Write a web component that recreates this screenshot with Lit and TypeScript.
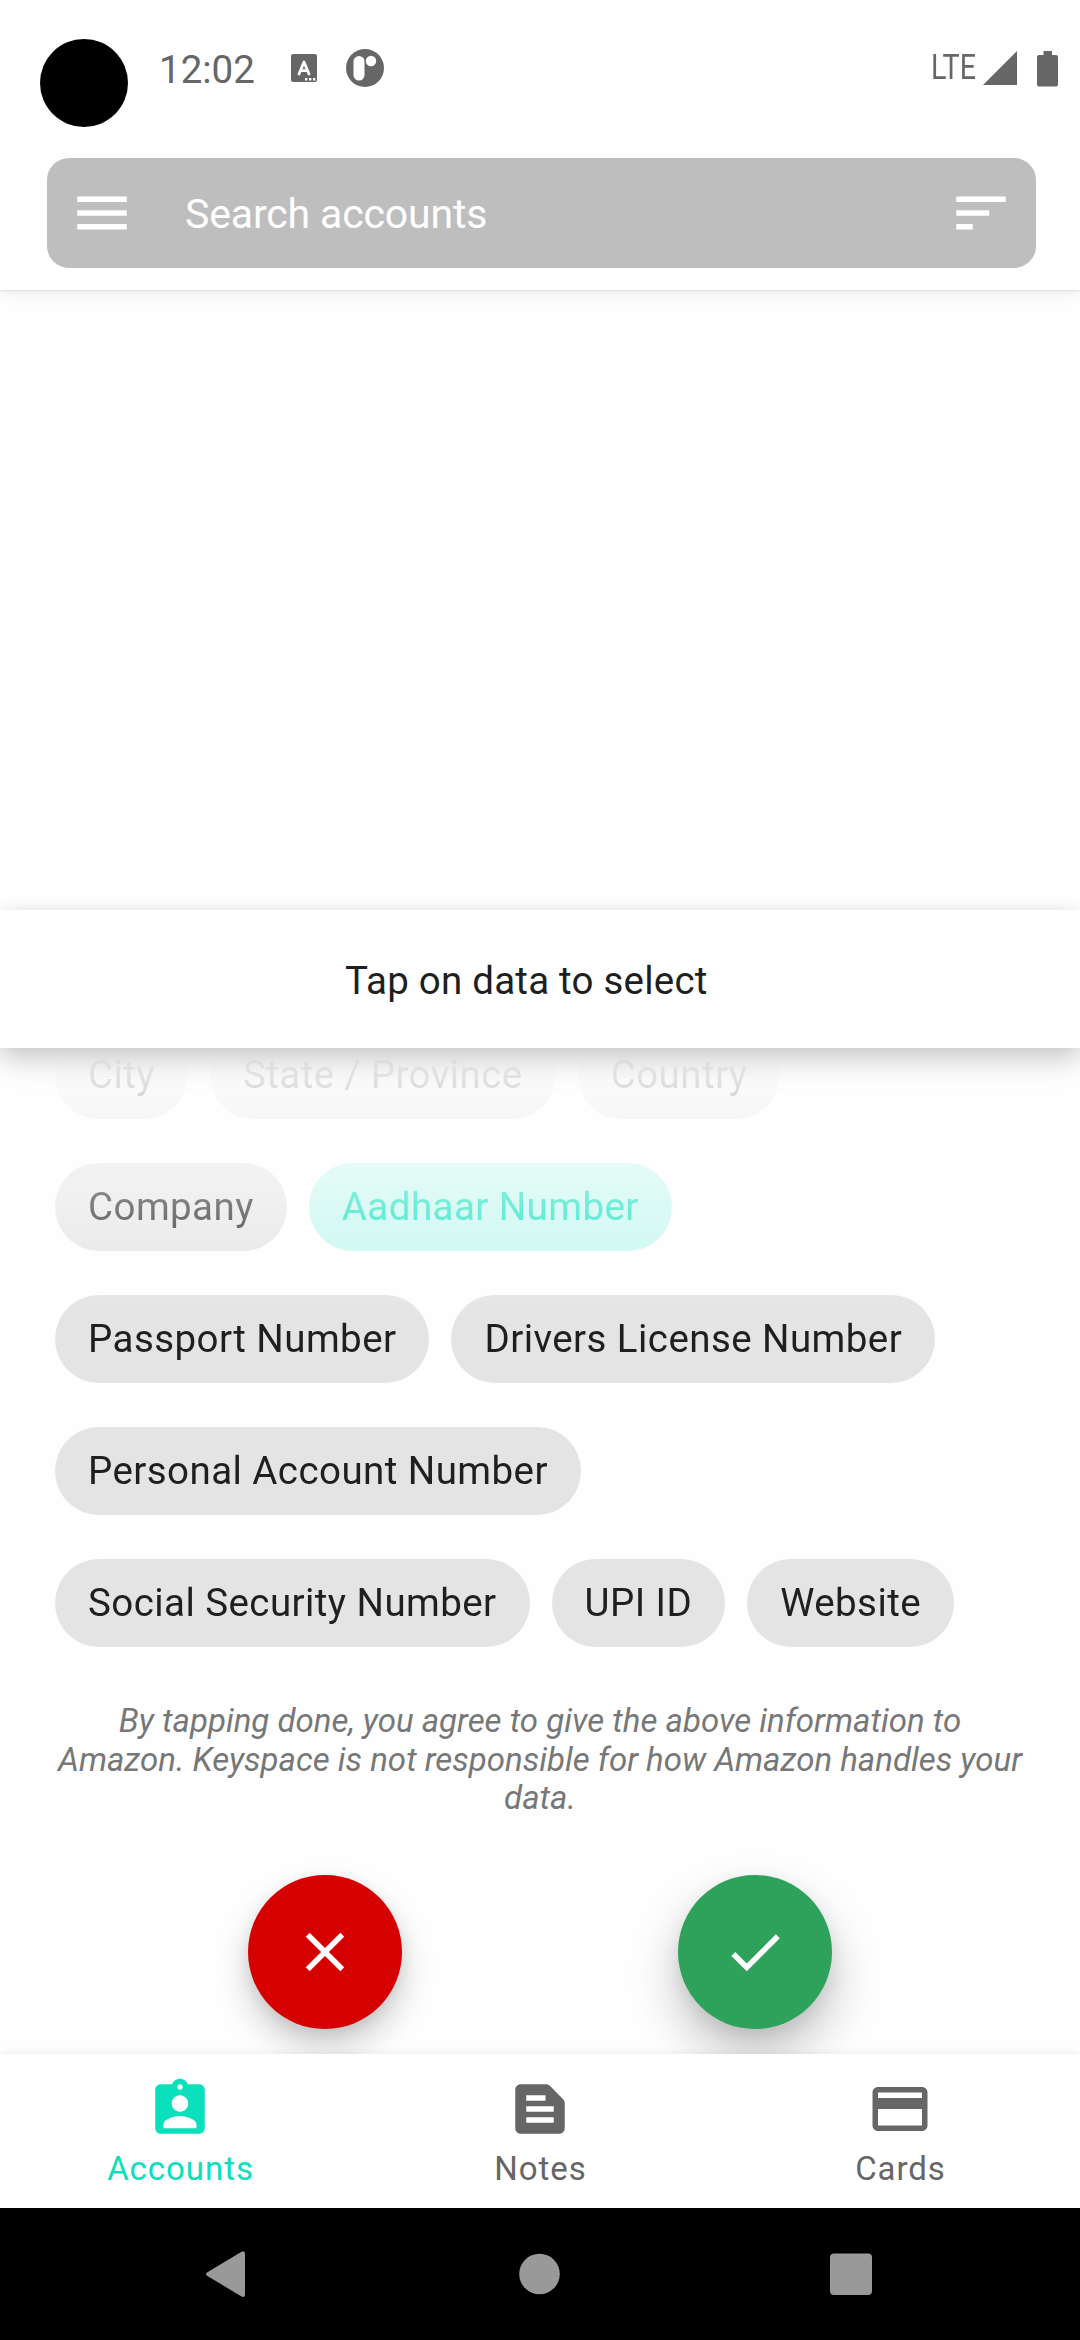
import { LitElement, html, css, svg } from "lit";
import { customElement, property } from "lit/decorators.js";
import { classMap } from "lit/directives/class-map.js";

const ICONS: Record<string, string> = {
  menu: "M3 18h18v-2H3v2zm0-4.98h18v-2H3v2zM3 6v2h18V6H3z",
  sort: "M3 18h6v-2H3v2zM3 6v2h18V6H3zm0 7h12v-2H3v2z",
  close: "M19 6.41L17.59 5 12 10.59 6.41 5 5 6.41 10.59 12 5 17.59 6.41 19 12 13.41 17.59 19 19 17.59 13.41 12z",
  check: "M9 16.17L4.83 12l-1.42 1.41L9 19 21 7l-1.41-1.41z",
  accounts:
    "M19 3h-4.18C14.4 1.84 13.3 1 12 1c-1.3 0-2.4.84-2.82 2H5c-1.1 0-2 .9-2 2v14c0 1.1.9 2 2 2h14c1.1 0 2-.9 2-2V5c0-1.1-.9-2-2-2zm-7 0c.55 0 1 .45 1 1s-.45 1-1 1-1-.45-1-1 .45-1 1-1zm0 4c1.66 0 3 1.34 3 3s-1.34 3-3 3-3-1.34-3-3 1.34-3 3-3zm6 12H6v-1.4c0-2 4-3.1 6-3.1s6 1.1 6 3.1V19z",
  notes:
    "M20.41 8.41l-4.83-4.83c-.37-.37-.88-.58-1.41-.58H5c-1.1 0-2 .9-2 2v14c0 1.1.9 2 2 2h14c1.1 0 2-.9 2-2V9.83c0-.53-.21-1.04-.59-1.42zM7 7h7v2H7V7zm10 10H7v-2h10v2zm0-4H7v-2h10v2z",
  cards:
    "M20 4H4c-1.11 0-1.99.89-1.99 2L2 18c0 1.11.89 2 2 2h16c1.11 0 2-.89 2-2V6c0-1.11-.89-2-2-2zm0 14H4v-6h16v6zm0-10H4V6h16v2z",
};

@customElement("ks-icon")
class KsIcon extends LitElement {
  static styles = css`
    :host { display: block; width: 66px; height: 66px; flex: none; }
    svg { display: block; width: 100%; height: 100%; fill: currentColor; }
  `;
  @property() name = "";
  render() {
    return html`<svg viewBox="0 0 24 24">${svg`<path d=${ICONS[this.name]}></path>`}</svg>`;
  }
}

@customElement("ks-status-bar")
class KsStatusBar extends LitElement {
  static styles = css`
    :host {
      display: flex; align-items: center; box-sizing: border-box;
      height: 136px; padding: 0 22px 0 40px; color: #666;
    }
    .camera { width: 88px; height: 88px; border-radius: 50%; background: #000; margin-top: 30px; }
    .time { font-size: 38.5px; margin-left: 31px; width: 103px; padding-top: 3px; }
    .badge { width: 26px; height: 28px; margin-left: 29px; }
    .round { width: 38px; height: 38px; margin-left: 29px; }
    .spacer { flex: 1; }
    .lte { width: 48px; height: 42px; line-height: 42px; font-size: 35px; margin-right: 3px; }
    .lte span { display: inline-block; transform: scaleX(0.82); transform-origin: 0 50%; }
    .signal { width: 36px; height: 36px; margin-right: 19px; }
    .battery { width: 21px; height: 37px; }
    svg { display: block; fill: currentColor; }
  `;
  render() {
    return html`
      <div class="camera"></div>
      <div class="time">12:02</div>
      <svg class="badge" viewBox="0 0 26 28">
        <rect width="26" height="28" rx="2"></rect>
        <path d="M8 20L13 8l5 12M9.6 16.6h6.8" fill="none" stroke="#fff" stroke-width="2.8" stroke-linecap="round" stroke-linejoin="round"></path>
        <path d="M14 24h2.4v2.4H14zM18 24h2.4v2.4H18zM22 24h2.4v2.4H22z" fill="#fff"></path>
      </svg>
      <svg class="round" viewBox="0 0 38 38">
        <circle cx="19" cy="19" r="19"></circle>
        <rect x="7.5" y="7" width="11" height="24.5" rx="5.5" fill="#fff"></rect>
        <circle cx="25" cy="12" r="5.2" fill="#fff"></circle>
      </svg>
      <div class="spacer"></div>
      <div class="lte"><span>LTE</span></div>
      <svg class="signal" viewBox="0 0 36 36"><path d="M35 1v34H1z"></path></svg>
      <svg class="battery" viewBox="0 0 21 37">
        <path d="M6.5 1h8.500v4H19a2 2 0 0 1 2 2v27.500a2 2 0 0 1-2 2H2a2 2 0 0 1-2-2V7a2 2 0 0 1 2-2h4.500z"></path>
      </svg>
    `;
  }
}

@customElement("ks-chip")
class KsChip extends LitElement {
  static styles = css`
    :host { display: block; flex: none; }
    .chip {
      height: 88px; line-height: 88px; padding: 0 33px; border-radius: 44px;
      background: #e4e4e4; color: #1f1f1f; font-size: 38.5px; letter-spacing: 0.43px; white-space: nowrap;
    }
    .selected { background: rgba(10, 224, 187, 0.24); color: #0ae0bb; }
  `;
  @property() label = "";
  @property({ type: Boolean }) selected = false;
  render() {
    return html`<div class=${classMap({ chip: true, selected: this.selected })}>${this.label}</div>`;
  }
}

const FIELD_ROWS = [
  ["City", "State / Province", "Country"],
  ["Company", "Aadhaar Number"],
  ["Passport Number", "Drivers License Number"],
  ["Personal Account Number"],
  ["Social Security Number", "UPI ID", "Website"],
];

const TABS = [
  { icon: "accounts", label: "Accounts", active: true },
  { icon: "notes", label: "Notes", active: false },
  { icon: "cards", label: "Cards", active: false },
];

@customElement("app-root")
class AppRoot extends LitElement {
  static styles = css`
    :host {
      display: flex; flex-direction: column; width: 1080px; height: 2340px; overflow: hidden;
      background: #fefefe; font-family: Roboto, "Liberation Sans", sans-serif;
    }
    .top {
      flex: none; height: 290px; background: #fff; position: relative; z-index: 1; display: flow-root;
      box-shadow: 0 1px 2px rgba(0, 0, 0, 0.09), 0 4px 14px rgba(0, 0, 0, 0.07);
    }
    ks-status-bar { height: 136px; }
    .search {
      display: flex; align-items: center; height: 110px; margin: 22px 44px 0 47px; padding: 0 22px;
      box-sizing: border-box; border-radius: 22px; background: #bebebe; color: #fff;
    }
    .query { flex: 1; margin-left: 50px; padding-top: 2px; font-size: 41px; letter-spacing: -0.15px; white-space: nowrap; }
    .page { flex: none; height: 620px; }
    .sheet { flex: none; height: 1144px; display: flex; flex-direction: column; overflow: visible; }
    .title {
      flex: none; box-sizing: border-box; height: 138px; padding-top: 3px; background: #fff; position: relative; z-index: 2;
      display: flex; align-items: center; color: #1f1f1f; font-size: 38.5px;
      box-shadow: 0 10px 22px rgba(0, 0, 0, 0.1), 0 14px 30px rgba(0, 0, 0, 0.1), 0 0 14px rgba(0, 0, 0, 0.05);
    }
    .title span { margin-left: 345px; letter-spacing: 0.22px; white-space: nowrap; }
    .fields {
      flex: none; height: 599px; box-sizing: border-box; padding: 0 55px; overflow: hidden;
      display: flex; flex-direction: column; justify-content: flex-end; gap: 44px;
      mask-image: linear-gradient(to bottom, transparent 0, #000 270px);
    }
    .row { flex: none; display: flex; gap: 22px; }
    .consent {
      flex: none; margin: 55px 44px 0; text-align: center; font-style: italic; font-size: 33px;
      line-height: 38.67px; color: #777;
    }
    .consent div { white-space: nowrap; }
    .actions { display: flex; gap: 276px; padding-left: 248px; margin-top: 57px; }
    .fab {
      width: 154px; height: 154px; border-radius: 50%; color: #fff;
      display: flex; align-items: center; justify-content: center;
    }
    .cancel { background: #d50000; box-shadow: 0 18px 34px rgba(0, 0, 0, 0.2), 0 4px 14px rgba(0, 0, 0, 0.08); }
    .done { background: #2ea25b; box-shadow: 0 26px 50px rgba(0, 0, 0, 0.24), 0 6px 18px rgba(0, 0, 0, 0.08); }
    .tabs {
      flex: none; height: 154px; display: grid; grid-template-columns: repeat(3, 1fr); background: #fff;
      position: relative; z-index: 3; box-shadow: 0 -1px 8px rgba(0, 0, 0, 0.07);
    }
    .tab { display: flex; flex-direction: column; align-items: center; padding-top: 22px; color: #666; }
    .tab.active { color: #0ae0bb; }
    .tab span { margin: 7px 0 0 1px; font-size: 33px; line-height: 39px; letter-spacing: 0.95px; }
    .system {
      flex: none; height: 132px; background: #000; position: relative; z-index: 3;
      display: flex; align-items: center; box-sizing: border-box; padding-left: 205px;
    }
    .system svg { display: block; height: 46px; fill: #999; }
    .back { width: 41px; }
    .home { width: 41px; margin: 0 270px 0 273px; }
    .recent { width: 42px; }
  `;
  render() {
    return html`
      <div class="top">
        <ks-status-bar></ks-status-bar>
        <div class="search">
          <ks-icon name="menu"></ks-icon>
          <div class="query">Search accounts</div>
          <ks-icon name="sort"></ks-icon>
        </div>
      </div>
      <div class="page"></div>
      <div class="sheet">
        <div class="title"><span>Tap on data to select</span></div>
        <div class="fields">
          ${FIELD_ROWS.map(
            (row) => html`<div class="row">
              ${row.map((f) => html`<ks-chip label=${f} ?selected=${f === "Aadhaar Number"}></ks-chip>`)}
            </div>`,
          )}
        </div>
        <div class="consent">
          <div>By tapping done, you agree to give the above information to</div>
          <div>Amazon. Keyspace is not responsible for how Amazon handles your</div>
          <div>data.</div>
        </div>
        <div class="actions">
          <div class="fab cancel"><ks-icon name="close"></ks-icon></div>
          <div class="fab done"><ks-icon name="check"></ks-icon></div>
        </div>
      </div>
      <div class="tabs">
        ${TABS.map(
          (t) => html`<div class=${classMap({ tab: true, active: t.active })}>
            <ks-icon name=${t.icon}></ks-icon><span>${t.label}</span>
          </div>`,
        )}
      </div>
      <div class="system">
        <svg class="back" viewBox="0 0 41 46"><path d="M2 21.5Q0 23 2 24.7L36.500 45.5Q40 47 40 43V3Q40-.8 36.5.7z"></path></svg>
        <svg class="home" viewBox="0 0 41 46"><circle cx="20.5" cy="23" r="20.3"></circle></svg>
        <svg class="recent" viewBox="0 0 42 46"><rect y="2.5" width="42" height="41.5" rx="4"></rect></svg>
      </div>
    `;
  }
}
